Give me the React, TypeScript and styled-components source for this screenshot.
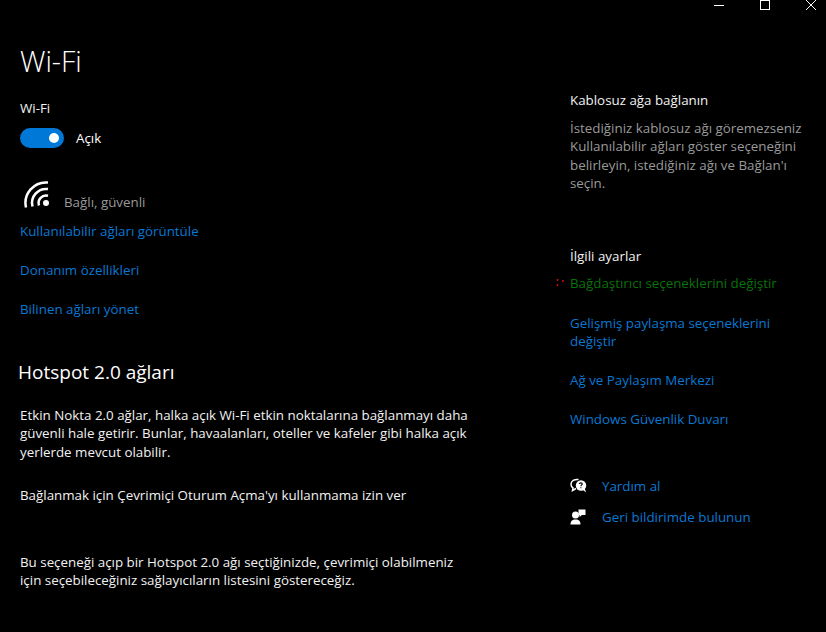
import styled, { createGlobalStyle } from 'styled-components';

const GlobalStyle = createGlobalStyle`
  html, body {
    margin: 0;
    padding: 0;
    background: #000000;
  }
  body {
    font-family: "Open Sans", "Noto Sans", sans-serif;
    font-size: 13.35px;
    color: #ffffff;
  }
`;

const Window = styled.div`
  position: relative;
  width: 826px;
  height: 632px;
  background: #000000;
  overflow: hidden;
  display: grid;
  grid-template-columns: 570px 256px;
`;

const TitleBar = styled.div`
  position: absolute;
  top: 0;
  right: 10px;
  display: flex;
  gap: 36px;
  svg {
    display: block;
  }
`;

const Main = styled.main`
  padding: 42px 0 0 20px;
  display: flex;
  flex-direction: column;
`;

const Side = styled.aside`
  padding: 90px 0 0 0;
  display: flex;
  flex-direction: column;
`;

const PageTitle = styled.h1`
  margin: 0;
  font-size: 28.5px;
  font-weight: 300;
  line-height: 38px;
`;

const Label = styled.div`
  margin-top: 18px;
  line-height: 20px;
  color: #f2f2f2;
`;

const ToggleRow = styled.div`
  margin-top: 10px;
  display: flex;
  align-items: center;
  gap: 12px;
`;

const Toggle = styled.div`
  width: 44px;
  height: 20px;
  border-radius: 10px;
  background: #0078d7;
  position: relative;
  &::after {
    content: '';
    position: absolute;
    right: 5px;
    top: 5px;
    width: 10px;
    height: 10px;
    border-radius: 50%;
    background: #ffffff;
  }
`;

const ToggleText = styled.span`
  line-height: 20px;
`;

const Status = styled.div`
  margin-top: 33px;
  height: 32px;
  padding-left: 4px;
  display: flex;
  align-items: flex-end;
  gap: 13px;
  svg {
    display: block;
    margin-bottom: 4px;
  }
`;

const StatusText = styled.span`
  line-height: 20px;
  margin-bottom: 1px;
  color: #999999;
`;

const LinkList = styled.div`
  margin-top: 9px;
  display: flex;
  flex-direction: column;
  gap: 20.5px;
`;

const Link = styled.a<{ $green?: boolean }>`
  display: block;
  line-height: 18.5px;
  color: ${(p) => (p.$green ? '#0a720a' : '#0a78d2')};
  margin-bottom: ${(p) => (p.$green ? '1px' : '0')};
  position: relative;
`;

const Section = styled.h2`
  margin: 40px 0 0 -2px;
  font-size: 19px;
  font-weight: 400;
  line-height: 26px;
`;

const Para = styled.p<{ $top: number }>`
  margin: ${(p) => p.$top}px 0 0;
  width: 470px;
  line-height: 18.5px;
  color: #f2f2f2;
`;

const SideHeading = styled.h3<{ $top?: number }>`
  margin: ${(p) => p.$top ?? 0}px 0 0;
  font-size: 13.35px;
  font-weight: 400;
  line-height: 20px;
  color: #f2f2f2;
`;

const SideText = styled.p`
  margin: 9px 0 0;
  line-height: 18.4px;
  color: #9a9a9a;
  white-space: nowrap;
`;

const SideLinks = styled.div`
  margin-top: 8px;
  display: flex;
  flex-direction: column;
  gap: 20.5px;
`;

const Marker = styled.svg`
  position: absolute;
  left: -15px;
  top: 5px;
  display: block;
`;

const HelpList = styled.div`
  margin-top: 48px;
  display: flex;
  flex-direction: column;
  gap: 12px;
`;

const HelpRow = styled.div`
  display: flex;
  align-items: center;
  gap: 16px;
  height: 19px;
  svg {
    display: block;
    flex: none;
    overflow: visible;
  }
`;

const App = () => {
  return (
    <>
      <GlobalStyle />
      <Window>
        <TitleBar>
          <svg width="10" height="10" viewBox="0 0 10 10">
            <path d="M0 5.5h10" stroke="#fff" fill="none" />
          </svg>
          <svg width="10" height="10" viewBox="0 0 10 10">
            <rect x="0.5" y="0.5" width="9" height="9" stroke="#fff" fill="none" />
          </svg>
          <svg width="10" height="10" viewBox="0 0 10 10">
            <path d="M0 0L10 10M10 0L0 10" stroke="#fff" fill="none" />
          </svg>
        </TitleBar>

        <Main>
          <PageTitle>Wi-Fi</PageTitle>
          <Label>Wi-Fi</Label>
          <ToggleRow>
            <Toggle />
            <ToggleText>Açık</ToggleText>
          </ToggleRow>
          <Status>
            <svg width="27" height="28" viewBox="0 0 27 28" fill="none" stroke="#fff" strokeWidth="2.5">
              <circle cx="22" cy="22" r="3" fill="#fff" stroke="none" />
              <path d="M2 26.500A20.500 20.500 0 0 1 24 1.600" />
              <path d="M8.500 25.500A14 14 0 0 1 24 8.100" />
              <path d="M15 24.500A7.500 7.500 0 0 1 24 14.800" />
            </svg>
            <StatusText>Bağlı, güvenli</StatusText>
          </Status>
          <LinkList>
            <Link>Kullanılabilir ağları görüntüle</Link>
            <Link>Donanım özellikleri</Link>
            <Link>Bilinen ağları yönet</Link>
          </LinkList>
          <Section>Hotspot 2.0 ağları</Section>
          <Para $top={21}>
            Etkin Nokta 2.0 ağlar, halka açık Wi-Fi etkin noktalarına bağlanmayı daha
            <br />
            güvenli hale getirir. Bunlar, havaalanları, oteller ve kafeler gibi halka açık
            <br />
            yerlerde mevcut olabilir.
          </Para>
          <Para $top={25}>Bağlanmak için Çevrimiçi Oturum Açma'yı kullanmama izin ver</Para>
          <Para $top={48}>
            Bu seçeneği açıp bir Hotspot 2.0 ağı seçtiğinizde, çevrimiçi olabilmeniz
            <br />
            için seçebileceğiniz sağlayıcıların listesini göstereceğiz.
          </Para>
        </Main>

        <Side>
          <SideHeading>Kablosuz ağa bağlanın</SideHeading>
          <SideText>
            İstediğiniz kablosuz ağı göremezseniz
            <br />
            Kullanılabilir ağları göster seçeneğini
            <br />
            belirleyin, istediğiniz ağı ve Bağlan'ı
            <br />
            seçin.
          </SideText>
          <SideHeading $top={53}>İlgili ayarlar</SideHeading>
          <SideLinks>
            <Link $green>
              <Marker width="9" height="8" viewBox="0 0 9 8" fill="#e01010">
                <circle cx="2.500" cy="1" r="0.9" />
                <circle cx="8" cy="2" r="0.9" />
                <circle cx="2.500" cy="6" r="0.9" />
              </Marker>
              Bağdaştırıcı seçeneklerini değiştir
            </Link>
            <Link>
              Gelişmiş paylaşma seçeneklerini
              <br />
              değiştir
            </Link>
            <Link>Ağ ve Paylaşım Merkezi</Link>
            <Link>Windows Güvenlik Duvarı</Link>
          </SideLinks>
          <HelpList>
            <HelpRow>
              <svg width="16" height="16" viewBox="0 0 16 16">
                <path d="M8.500 1.500C4.500 1 1 3 1 6.200c0 1.600.8 2.900 2 3.700L2.500 12.500l3.500-2" fill="none" stroke="#fff" strokeWidth="1.500" />
                <circle cx="11" cy="7.500" r="5.200" fill="#fff" />
                <path d="M12.500 11.500l3.500 3-1.500-5z" fill="#fff" />
                <path d="M9.300 6c.2-1.500 3-1.500 3 0 0 1.100-1.400 1-1.400 2.200M10.900 9.200v1" fill="none" stroke="#000" strokeWidth="1.100" />
              </svg>
              <Link>Yardım al</Link>
            </HelpRow>
            <HelpRow>
              <svg width="16" height="16" viewBox="0 0 16 16">
                <circle cx="5.500" cy="6" r="3.500" fill="#fff" />
                <path d="M0.500 15.500c0-3.500 1.500-5 5-5s5 1.500 5 5z" fill="#fff" />
                <path d="M8.500 0.500h7v5.500h-3.500l-2.500 2V6H8.500z" fill="#fff" />
              </svg>
              <Link>Geri bildirimde bulunun</Link>
            </HelpRow>
          </HelpList>
        </Side>
      </Window>
    </>
  );
};

export default App;
